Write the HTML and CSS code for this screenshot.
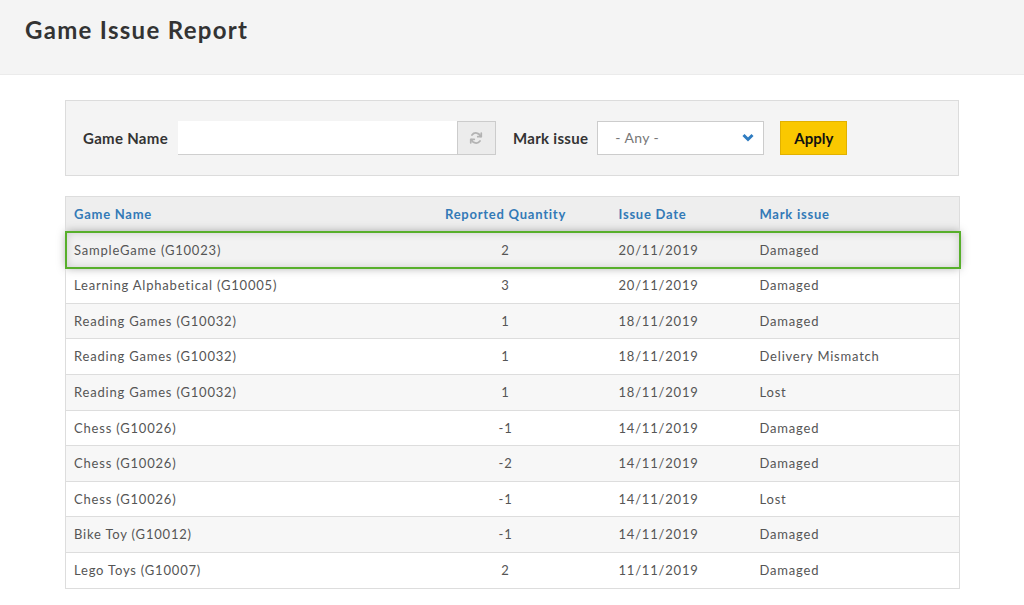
FILE: index.html
```html
<!DOCTYPE html>
<html lang="en">
<head>
<meta charset="utf-8">
<title>Game Issue Report</title>
<link rel="stylesheet" href="styles.css">
</head>
<body>
<header class="page-header">
  <h1 class="page-title">Game Issue Report</h1>
</header>
<main class="content">
  <form class="filters">
    <label class="filter-label" for="game-name">Game Name</label>
    <div class="input-group">
      <input class="text-input" id="game-name" type="text">
      <button class="refresh-btn" type="button" aria-label="Reset">
        <svg width="14" height="14" viewBox="0 0 16 16" fill="none" stroke="#b3b3b3" stroke-width="2" stroke-linecap="round">
          <path d="M13.2 6.2A5.5 5.5 0 0 0 3.4 4.6"/>
          <path d="M2.8 9.8a5.5 5.5 0 0 0 9.8 1.6"/>
          <path d="M14 2.5v4h-4" stroke-linejoin="round"/>
          <path d="M2 13.5v-4h4" stroke-linejoin="round"/>
        </svg>
      </button>
    </div>
    <label class="filter-label mark-label" for="mark-issue">Mark issue</label>
    <div class="select-box" id="mark-issue">
      <span class="select-value">- Any -</span>
      <svg class="chevron" width="12" height="9" viewBox="0 0 12 9"><path d="M1.5 2 6 6.5 10.5 2" fill="none" stroke="#2f7cc1" stroke-width="3" stroke-linejoin="miter"/></svg>
    </div>
    <button class="apply-btn" type="button">Apply</button>
  </form>

  <table class="report">
    <colgroup>
      <col class="c-name"><col class="c-qty"><col class="c-date"><col class="c-mark">
    </colgroup>
    <thead>
      <tr><th>Game Name</th><th class="center">Reported Quantity</th><th>Issue Date</th><th>Mark issue</th></tr>
    </thead>
    <tbody>
      <tr class="selected"><td>SampleGame (G10023)</td><td class="center">2</td><td>20/11/2019</td><td>Damaged</td></tr>
      <tr><td>Learning Alphabetical (G10005)</td><td class="center">3</td><td>20/11/2019</td><td>Damaged</td></tr>
      <tr><td>Reading Games (G10032)</td><td class="center">1</td><td>18/11/2019</td><td>Damaged</td></tr>
      <tr><td>Reading Games (G10032)</td><td class="center">1</td><td>18/11/2019</td><td>Delivery Mismatch</td></tr>
      <tr><td>Reading Games (G10032)</td><td class="center">1</td><td>18/11/2019</td><td>Lost</td></tr>
      <tr><td>Chess (G10026)</td><td class="center">-1</td><td>14/11/2019</td><td>Damaged</td></tr>
      <tr><td>Chess (G10026)</td><td class="center">-2</td><td>14/11/2019</td><td>Damaged</td></tr>
      <tr><td>Chess (G10026)</td><td class="center">-1</td><td>14/11/2019</td><td>Lost</td></tr>
      <tr><td>Bike Toy (G10012)</td><td class="center">-1</td><td>14/11/2019</td><td>Damaged</td></tr>
      <tr><td>Lego Toys (G10007)</td><td class="center">2</td><td>11/11/2019</td><td>Damaged</td></tr>
    </tbody>
  </table>
</main>
</body>
</html>
```

FILE: styles.css
```css
* { box-sizing: border-box; }

html, body {
  margin: 0;
  padding: 0;
  background: #fff;
  font-family: "Lato", "Open Sans", "Liberation Sans", sans-serif;
  color: #555;
}

.page-header {
  height: 75px;
  background: #f4f4f4;
  border-bottom: 1px solid #ebebeb;
  padding: 15px 25px 0;
}

.page-title {
  margin: 0;
  font-size: 24px;
  line-height: 30px;
  font-weight: 700;
  color: #333;
  letter-spacing: 1.3px;
}

.content {
  width: 894px;
  margin: 25px 0 0 65px;
}

.filters {
  display: flex;
  align-items: center;
  height: 76px;
  background: #f4f4f4;
  border: 1px solid #dcdcdc;
  padding: 0 0 1px 17px;
}

.filter-label {
  font-size: 15px;
  font-weight: 700;
  color: #333;
  margin-right: 10px;
  letter-spacing: 0.3px;
}

.mark-label { margin-left: 17px; margin-right: 9px; }

.input-group {
  display: flex;
  height: 34px;
}

.text-input {
  width: 279px;
  height: 34px;
  border: none;
  border-bottom: 1px solid #cfcfcf;
  background: #fff;
  margin: 0;
  padding: 0 10px;
  outline: none;
}

.refresh-btn {
  width: 39px;
  height: 34px;
  margin: 0;
  padding: 0;
  background: #ececec;
  border: 1px solid #cccccc;
  display: flex;
  align-items: center;
  justify-content: center;
}

.select-box {
  width: 167px;
  height: 34px;
  background: #fff;
  border: 1px solid #cccccc;
  display: flex;
  align-items: center;
  justify-content: space-between;
  padding: 0 9px 0 17px;
}

.select-value {
  font-size: 14px;
  color: #777;
  letter-spacing: 0.4px;
}

.apply-btn {
  margin-left: 16px;
  width: 67px;
  height: 34px;
  background: #fac800;
  border: 1px solid #e1b100;
  font-family: inherit;
  font-size: 15px;
  font-weight: 700;
  color: #111;
  padding: 0;
}

.report {
  width: 894px;
  margin-top: 20px;
  border-collapse: collapse;
  table-layout: fixed;
  border: 1px solid #dddddd;
  font-size: 13px;
}

.c-name { width: 336px; }
.c-qty { width: 209px; }
.c-date { width: 141px; }
.c-mark { width: 208px; }

.report th,
.report td {
  text-align: left;
  padding: 8px 9px 8px 8px;
  line-height: 18.6px;
  letter-spacing: 0.8px;
}

.report th {
  background: #eeeeee;
  color: #337ab7;
  font-weight: 700;
  padding-top: 8px;
  padding-bottom: 8px;
  letter-spacing: 0.75px;
}

.report td {
  border-top: 1px solid #dddddd;
  color: #555;
}

.report .center { text-align: center; }

.report tbody tr:nth-child(odd) { background: #f7f7f7; }

.report tbody tr.selected {
  background: #f2f2f2;
  outline: 2px solid #57af2b;
  outline-offset: -1px;
  box-shadow: 0 0 9px rgba(0, 0, 0, 0.35), inset 0 0 10px rgba(0, 0, 0, 0.18);
}

.report tbody tr.selected td { border-top-color: transparent; }
```
